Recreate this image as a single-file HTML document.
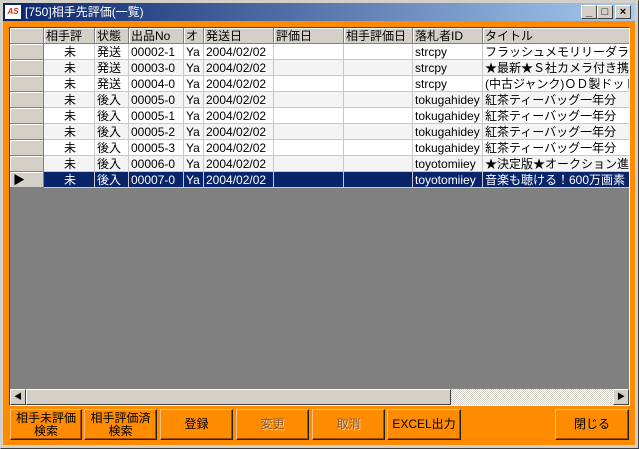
<!DOCTYPE html>
<html><head><meta charset="utf-8"><style>
*{margin:0;padding:0;box-sizing:border-box}
body{width:639px;height:449px;overflow:hidden;background:#d4d0c8;font-family:"Liberation Sans","Noto Sans CJK JP",sans-serif;font-size:12px;position:relative}
.win{position:absolute;left:0;top:0;width:639px;height:449px;border:1px solid;border-color:#d4d0c8 #404040 #404040 #d4d0c8;}
.title{position:absolute;left:3px;top:3px;width:632px;height:18px;background:linear-gradient(to right,#0a246a,#a6caf0);color:#fff;font-size:12px;line-height:18px;padding-left:22px}
.logo{position:absolute;left:2px;top:2px;width:16px;height:14px;background:#fff;color:#e02000;font-size:8px;font-weight:bold;line-height:14px;text-align:center;font-style:italic}
.tb{position:absolute;top:2px;width:16px;height:14px;background:#d4d0c8;border:1px solid;border-color:#fff #404040 #404040 #fff;color:#000;font-size:11px;line-height:12px;text-align:center;font-weight:bold}
.orange{position:absolute;left:3px;top:21px;width:632px;height:424px;background:#ff8c00}
.grid{position:absolute;left:9px;top:27px;width:621px;height:379px;background:#808080;border:1px solid;border-color:#404040 #fff #fff #404040;overflow:hidden}
.row{position:absolute;left:0;height:16px;width:620px}
.c{position:absolute;top:0;height:16px;line-height:16px;white-space:nowrap;overflow:hidden;border-right:1px solid #c8c8c8;border-bottom:1px solid #c8c8c8;padding-left:2px}
.h .c{background:#d4d0c8;border-right:1px solid #808080;border-bottom:1px solid #808080;box-shadow:inset 1px 1px #fff}
.ind{background:#d4d0c8;border-right:1px solid #808080!important;border-bottom:1px solid #808080!important;box-shadow:inset 1px 1px #fff}
.sel .c{background:#0a246a;color:#fff}
.sel .c.ind{background:#d4d0c8;color:#000}
.scroll{position:absolute;left:0;bottom:0;width:619px;height:16px;background:#d4d0c8}
.sb{position:absolute;top:0;width:16px;height:16px;background:#d4d0c8;border:1px solid;border-color:#fff #404040 #404040 #fff;font-size:8px;line-height:14px;text-align:center}
.btn{position:absolute;top:409px;height:31px;background:#ff8c00;border:1px solid;border-color:#ffc080 #202020 #202020 #ffc080;box-shadow:inset -1px -1px #a05000;text-align:center;font-size:12px;line-height:13px;display:flex;align-items:center;justify-content:center;color:#000}
.dis{color:#8a5a2a;text-shadow:1px 1px #ffd0a0}
</style></head><body>
<div class="win"></div>
<div class="title"><div class="logo">AS</div>[750]相手先評価(一覧)
<div class="tb" style="left:578px">_</div><div class="tb" style="left:594px">□</div><div class="tb" style="left:612px">×</div></div>
<div class="orange"></div>
<div class="grid">
<div class="row h" style="top:0">
<div class="c" style="left:0;width:34px"></div>
<div class="c" style="left:34px;width:51px">相手評</div>
<div class="c" style="left:85px;width:34px">状態</div>
<div class="c" style="left:119px;width:55px">出品No</div>
<div class="c" style="left:174px;width:20px">オ</div>
<div class="c" style="left:194px;width:70px">発送日</div>
<div class="c" style="left:264px;width:70px">評価日</div>
<div class="c" style="left:334px;width:69px">相手評価日</div>
<div class="c" style="left:403px;width:70px">落札者ID</div>
<div class="c" style="left:473px;width:147px">タイトル</div>
</div>
<div id="rows"></div>
<div class="scroll"><div class="sb" style="left:0">◀</div>
<div style="position:absolute;left:16px;top:0;width:425px;height:16px;background:#d4d0c8;border:1px solid;border-color:#fff #404040 #404040 #fff"></div>
<div style="position:absolute;left:441px;top:0;width:162px;height:16px;background:repeating-conic-gradient(#fff 0 25%,#d4d0c8 0 50%) 0 0/2px 2px"></div>
<div class="sb" style="left:603px">▶</div></div>
</div>
<div class="btn" style="left:10px;width:72px">相手未評価<br>検索</div>
<div class="btn" style="left:84px;width:73px">相手評価済<br>検索</div>
<div class="btn" style="left:160px;width:73px">登録</div>
<div class="btn dis" style="left:236px;width:73px">変更</div>
<div class="btn dis" style="left:312px;width:73px">取消</div>
<div class="btn" style="left:387px;width:74px">EXCEL出力</div>
<div class="btn" style="left:555px;width:74px">閉じる</div>
<script>
var d=[["発送","00002-1","strcpy","フラッシュメモリリーダライタ"],["発送","00003-0","strcpy","★最新★Ｓ社カメラ付き携帯"],["発送","00004-0","strcpy","(中古ジャンク)ＯＤ製ドットイン"],["後入","00005-0","tokugahidey","紅茶ティーバッグ一年分"],["後入","00005-1","tokugahidey","紅茶ティーバッグ一年分"],["後入","00005-2","tokugahidey","紅茶ティーバッグ一年分"],["後入","00005-3","tokugahidey","紅茶ティーバッグ一年分"],["後入","00006-0","toyotomiiey","★決定版★オークション進行補"],["後入","00007-0","toyotomiiey","音楽も聴ける！600万画素"]];
var h="";d.forEach(function(r,i){var sel=i==8,bg=i%2?"#f4f4f4":"#fff";var s=sel?"":"background:"+bg+";";
h+='<div class="row'+(sel?' sel':'')+'" style="top:'+(16+i*16)+'px">'+
'<div class="c ind" style="left:0;width:34px;padding-left:3px">'+(sel?'▶':'')+'</div>'+
'<div class="c" style="left:34px;width:51px;text-align:center;'+s+'">未</div>'+
'<div class="c" style="left:85px;width:34px;'+s+'">'+r[0]+'</div>'+
'<div class="c" style="left:119px;width:55px;'+s+'">'+r[1]+'</div>'+
'<div class="c" style="left:174px;width:20px;'+s+'">Ya</div>'+
'<div class="c" style="left:194px;width:70px;'+s+'">2004/02/02</div>'+
'<div class="c" style="left:264px;width:70px;'+s+'"></div>'+
'<div class="c" style="left:334px;width:69px;'+s+'"></div>'+
'<div class="c" style="left:403px;width:70px;'+s+'">'+r[2]+'</div>'+
'<div class="c" style="left:473px;width:147px;'+s+'">'+r[3]+'</div></div>';});
document.getElementById("rows").innerHTML=h;
</script>
</body></html>
